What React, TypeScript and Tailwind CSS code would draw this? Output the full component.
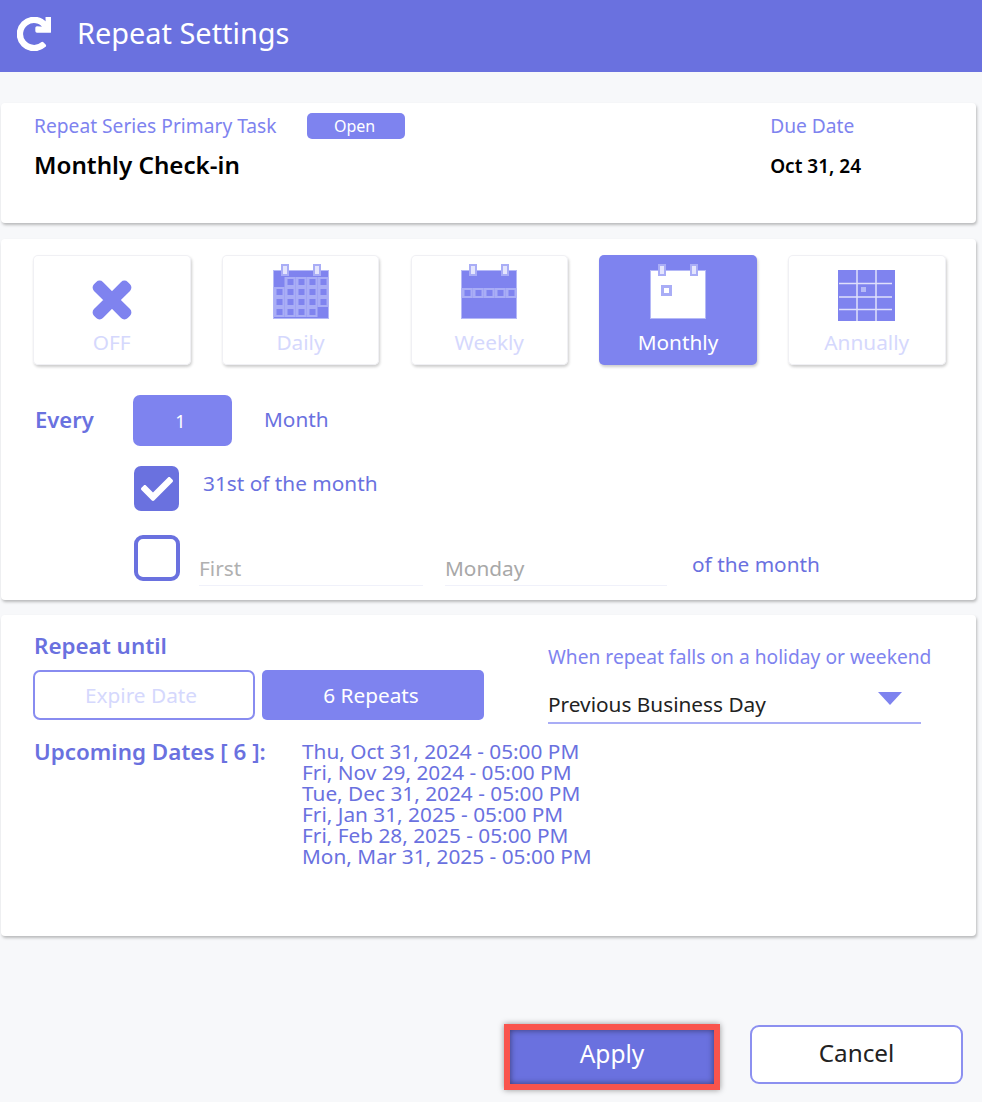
import { FaCheck, FaRedo, FaTimes } from "react-icons/fa";

const DATES = [
  "Thu, Oct 31, 2024 - 05:00 PM",
  "Fri, Nov 29, 2024 - 05:00 PM",
  "Tue, Dec 31, 2024 - 05:00 PM",
  "Fri, Jan 31, 2025 - 05:00 PM",
  "Fri, Feb 28, 2025 - 05:00 PM",
  "Mon, Mar 31, 2025 - 05:00 PM",
];

function CalendarFrame({ fill, children }: { fill: string; children?: React.ReactNode }) {
  return (
    <svg width="56" height="55" viewBox="0 0 56 55">
      <rect x="0.5" y="6.5" width="55" height="48" fill={fill} stroke="#b5b9f7" strokeWidth="1" />
      <rect x="9" y="1" width="6" height="10" fill="#e4e5fd" stroke="#a9adf6" strokeWidth="2" />
      <rect x="41" y="1" width="6" height="10" fill="#e4e5fd" stroke="#a9adf6" strokeWidth="2" />
      {children}
    </svg>
  );
}

function DailyIcon() {
  const cells = [];
  for (let r = 0; r < 4; r++) {
    for (let c = 0; c < 5; c++) {
      if ((r === 0 && c === 0) || (r === 3 && c === 4)) continue;
      const x = 0.5 + c * 11;
      const y = 13 + r * 10;
      cells.push(<rect key={`${r}-${c}`} x={x} y={y} width="11" height="10" fill="#a9adf6" />);
      cells.push(<rect key={`i-${r}-${c}`} x={x + 3} y={y + 2} width="6" height="6" fill="#7f83ef" />);
    }
  }
  return <CalendarFrame fill="#7f83ef">{cells}</CalendarFrame>;
}

function WeeklyIcon() {
  const cells = [];
  for (let c = 0; c < 5; c++) {
    const x = 0.5 + c * 11;
    cells.push(<rect key={c} x={x} y="24" width="11" height="10" fill="#a9adf6" />);
    cells.push(<rect key={`i${c}`} x={x + 3} y="26" width="6" height="6" fill="#7f83ef" />);
  }
  return <CalendarFrame fill="#7f83ef">{cells}</CalendarFrame>;
}

function MonthlyIcon() {
  return (
    <CalendarFrame fill="#ffffff">
      <rect x="11" y="21" width="11" height="11" fill="#a9adf6" />
      <rect x="14" y="24" width="5" height="5" fill="#ffffff" />
    </CalendarFrame>
  );
}

function AnnuallyIcon() {
  return (
    <svg width="57" height="51" viewBox="0 0 57 51" className="-mb-[2px]">
      <rect width="57" height="51" fill="#7f83ef" />
      <g stroke="#dfe0fb" strokeWidth="1.5">
        <line x1="19" y1="0" x2="19" y2="51" />
        <line x1="38" y1="0" x2="38" y2="51" />
        <line x1="1" y1="13.5" x2="54" y2="13.5" />
        <line x1="1" y1="27" x2="54" y2="27" />
        <line x1="1" y1="39.5" x2="54" y2="39.5" />
      </g>
      <rect x="23" y="17" width="5" height="5" fill="#b5b9f7" />
    </svg>
  );
}

function ModeButton({ label, active, icon }: { label: string; active?: boolean; icon: React.ReactNode }) {
  return (
    <div
      className={`flex h-[110px] w-[157.5px] flex-col items-center rounded-[5px] ${
        active
          ? "bg-[#7e83ef] text-white shadow-[1px_2px_3px_rgba(0,0,0,0.2)]"
          : "bg-white text-[#d5d8fd] shadow-[inset_0_0_0_1px_#f0f0f4,1px_2px_3px_rgba(0,0,0,0.2)]"
      }`}
    >
      <div className="flex h-[64px] w-full items-end justify-center">{icon}</div>
      <span className="mt-[9px] text-[20.8px] leading-[28px]">{label}</span>
    </div>
  );
}

export default function App() {
  return (
    <div className="flex h-[1102px] w-[982px] flex-col overflow-hidden bg-[#f7f8fa] font-['Noto_Sans',sans-serif]">
      <header className="flex h-[72px] shrink-0 items-center bg-[#6a71df] pb-[4px] pl-[17px] text-white">
        <FaRedo className="h-[34px] w-[34px]" stroke="currentColor" strokeWidth={24} />
        <h1 className="mb-[2px] ml-[26px] text-[28.9px]">Repeat Settings</h1>
      </header>

      <section className="ml-[1px] mt-[31px] flex h-[120px] w-[975px] shrink-0 rounded-[4px] bg-white pl-[33px] pr-[115px] pt-[10px] shadow-[1px_2px_3px_rgba(0,0,0,0.25)]">
        <div className="flex-1">
          <div className="flex items-center">
            <span className="text-[19.2px] leading-[26px] text-[#7e83ef]">Repeat Series Primary Task</span>
            <span className="ml-[30px] flex h-[26px] w-[98px] items-center justify-center rounded-[5px] bg-[#7e83ef] pr-[2px] text-[16px] text-white">
              Open
            </span>
          </div>
          <p className="mt-[11px] text-[24.2px] font-semibold leading-[30px] text-black">Monthly Check-in</p>
        </div>
        <div>
          <p className="text-[19.2px] leading-[26px] text-[#7e83ef]">Due Date</p>
          <p className="mt-[15px] text-[19px] font-semibold leading-[24px] text-black">Oct 31, 24</p>
        </div>
      </section>

      <section className="ml-[1px] mt-[16px] h-[361px] w-[975px] shrink-0 rounded-[4px] bg-white pl-[32px] pt-[16px] shadow-[1px_2px_3px_rgba(0,0,0,0.25)]">
        <div className="flex gap-[31.25px]">
          <ModeButton
            label="OFF"
            icon={<FaTimes className="-mb-[7px] h-[52px] w-[52px] text-[#7f83ef]" stroke="currentColor" strokeWidth={30} />}
          />
          <ModeButton label="Daily" icon={<DailyIcon />} />
          <ModeButton label="Weekly" icon={<WeeklyIcon />} />
          <ModeButton label="Monthly" active icon={<MonthlyIcon />} />
          <ModeButton label="Annually" icon={<AnnuallyIcon />} />
        </div>

        <div className="mt-[30px] flex h-[51px] items-center">
          <span className="w-[100px] pb-[3px] pl-[2px] text-[22px] font-semibold text-[#6a71df]">Every</span>
          <span className="flex h-[51px] w-[99px] items-center justify-center rounded-[7px] bg-[#7e83ef] pr-[4px] pt-[1px] text-[18px] text-white">
            1
          </span>
          <span className="ml-[32px] pb-[1px] text-[20.8px] text-[#6a71df]">Month</span>
        </div>

        <div className="ml-[101px] mt-[20px] flex items-start">
          <span className="flex h-[45px] w-[45px] items-center justify-center rounded-[7px] bg-[#6a71df] text-white">
            <FaCheck className="h-[32px] w-[32px]" />
          </span>
          <span className="ml-[24px] mt-[3px] text-[20.8px] leading-[28px] text-[#6a71df]">31st of the month</span>
        </div>

        <div className="ml-[101px] mt-[24px] flex items-start">
          <span className="h-[46px] w-[46px] rounded-[9px] border-[4px] border-[#6a71df] bg-white" />
          <span className="ml-[19px] mt-[17px] h-[34px] w-[224px] border-b border-[#f0f1fa] text-[20.8px] leading-[32px] text-[#b0b0b0]">
            First
          </span>
          <span className="ml-[22px] mt-[17px] h-[34px] w-[222px] border-b border-[#f0f1fa] text-[20.8px] leading-[32px] text-[#a8a8a8]">
            Monday
          </span>
          <span className="ml-[25px] mt-[15px] text-[20.8px] leading-[28px] text-[#6a71df]">of the month</span>
        </div>
      </section>

      <section className="ml-[1px] mt-[15px] h-[321px] w-[975px] shrink-0 rounded-[4px] bg-white pl-[32px] pt-[16px] shadow-[1px_2px_3px_rgba(0,0,0,0.25)]">
        <div className="flex">
          <div className="w-[515px]">
            <p className="pl-[1px] text-[22.4px] font-semibold leading-[30px] text-[#6a71df]">Repeat until</p>
            <div className="mt-[9px] flex gap-[7px]">
              <span className="flex h-[50px] w-[222px] items-center justify-center rounded-[7px] border-2 border-[#888cf0] bg-white pr-[6px] pt-[2px] text-[20.8px] text-[#d5d8fd]">
                Expire Date
              </span>
              <span className="flex h-[50px] w-[222px] items-center justify-center rounded-[5px] bg-[#7e83ef] pr-[4px] pt-[2px] text-[20.8px] text-white">
                6 Repeats
              </span>
            </div>
          </div>
          <div className="w-[385px] pt-[12px]">
            <p className="text-[19.2px] leading-[28px] text-[#7e83ef]">When repeat falls on a holiday or weekend</p>
            <div className="mt-[8px] flex h-[45px] w-[373px] items-start justify-between border-b-2 border-[#a9adf6] pr-[19px]">
              <span className="mt-[10px] text-[20.8px] leading-[30px] text-[#222222]">Previous Business Day</span>
              <span className="mt-[13px] h-0 w-0 border-x-[12px] border-t-[13px] border-x-transparent border-t-[#7e83ef]" />
            </div>
          </div>
        </div>
        <div className="mt-[14px] flex">
          <p className="w-[269px] pl-[1px] text-[22.4px] font-semibold leading-[28px] text-[#6a71df]">
            Upcoming Dates [ 6 ]:
          </p>
          <div className="pt-[3px] text-[20.8px] leading-[21px] text-[#6a71df]">
            {DATES.map((d) => (
              <div key={d}>{d}</div>
            ))}
          </div>
        </div>
      </section>

      <footer className="mt-[88px] flex items-start pl-[504px]">
        <button className="flex h-[66px] w-[216px] items-center justify-center border-[6px] border-[#f9544d] bg-[#6a71df] pb-[5px] text-[24.5px] text-white shadow-[inset_0_0_6px_rgba(0,0,0,0.5),0_0_6px_rgba(0,0,0,0.4)]">
          Apply
        </button>
        <button className="ml-[30px] mt-[1px] flex h-[59px] w-[213px] items-center justify-center rounded-[9px] border-2 border-[#8c90f0] bg-white pb-[3px] text-[24.3px] text-[#222222]">
          Cancel
        </button>
      </footer>
    </div>
  );
}
